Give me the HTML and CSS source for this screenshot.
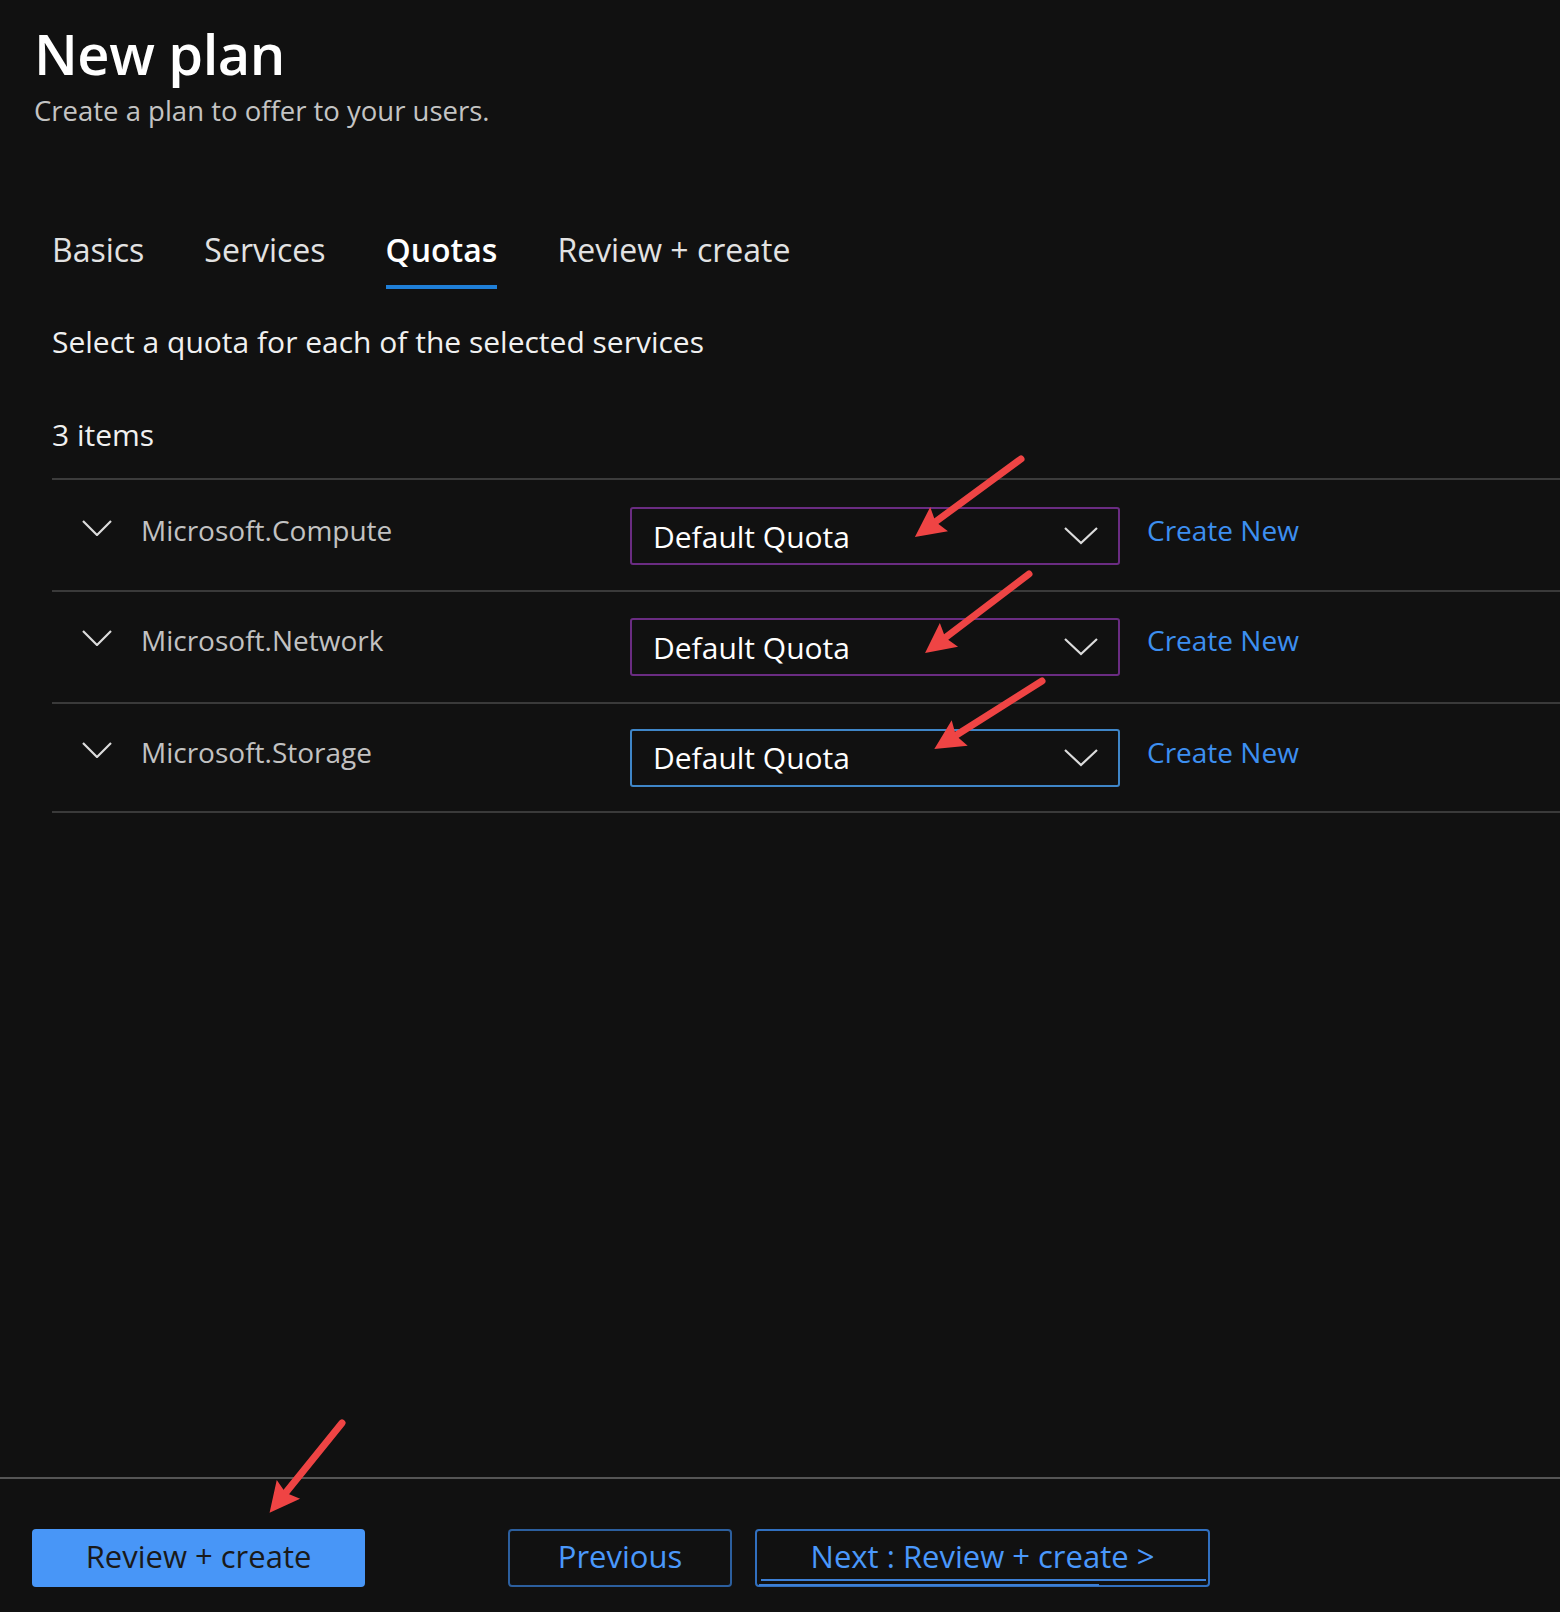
FILE: index.html
```html
<!DOCTYPE html>
<html lang="en">
<head>
<meta charset="utf-8">
<title>New plan</title>
<link rel="stylesheet" href="styles.css">
</head>
<body>
<div class="page">
  <header class="head">
    <h1 class="title">New plan</h1>
    <p class="subtitle">Create a plan to offer to your users.</p>
  </header>

  <nav class="tabs">
    <span class="tab">Basics</span>
    <span class="tab">Services</span>
    <span class="tab active">Quotas</span>
    <span class="tab">Review + create</span>
  </nav>

  <section class="content">
    <p class="desc">Select a quota for each of the selected services</p>
    <p class="count">3 items</p>
    <div class="list">
      <div class="row row-first">
        <svg class="expander" viewBox="0 0 30 16" width="30" height="16"><polyline points="1,1 15,15 29,1"/></svg>
        <span class="name">Microsoft.Compute</span>
        <div class="select select-purple"><span class="select-text">Default Quota</span><svg class="select-chev" viewBox="0 0 34 18" width="34" height="18"><polyline points="1,1 17,16 33,1"/></svg></div>
        <a class="link">Create New</a>
      </div>
      <div class="row">
        <svg class="expander" viewBox="0 0 30 16" width="30" height="16"><polyline points="1,1 15,15 29,1"/></svg>
        <span class="name">Microsoft.Network</span>
        <div class="select select-purple"><span class="select-text">Default Quota</span><svg class="select-chev" viewBox="0 0 34 18" width="34" height="18"><polyline points="1,1 17,16 33,1"/></svg></div>
        <a class="link">Create New</a>
      </div>
      <div class="row row-last">
        <svg class="expander" viewBox="0 0 30 16" width="30" height="16"><polyline points="1,1 15,15 29,1"/></svg>
        <span class="name">Microsoft.Storage</span>
        <div class="select select-blue"><span class="select-text">Default Quota</span><svg class="select-chev" viewBox="0 0 34 18" width="34" height="18"><polyline points="1,1 17,16 33,1"/></svg></div>
        <a class="link">Create New</a>
      </div>
    </div>
  </section>

  <footer class="footer">
    <button class="btn btn-primary">Review + create</button>
    <button class="btn btn-outline btn-prev">Previous</button>
    <button class="btn btn-outline btn-next">Next : Review + create &gt;</button>
  </footer>

  <svg class="annot" viewBox="0 0 1560 1612" width="1560" height="1612">
    <defs>
      <marker id="ah" viewBox="0 0 10 10" refX="5" refY="5" markerWidth="34" markerHeight="30" markerUnits="userSpaceOnUse" orient="auto">
        <path d="M0,0 L10,5 L0,10 L1.5,5 z" fill="#ef4444"/>
      </marker>
    </defs>
    <line x1="1021" y1="459" x2="927" y2="528" marker-end="url(#ah)"/>
    <line x1="1029" y1="574" x2="937" y2="644" marker-end="url(#ah)"/>
    <line x1="1042" y1="681" x2="947" y2="741" marker-end="url(#ah)"/>
    <line x1="342" y1="1423" x2="279" y2="1501" marker-end="url(#ah)"/>
  </svg>
</div>
</body>
</html>
```

FILE: styles.css
```css
* { box-sizing: border-box; }

html, body {
  margin: 0;
  padding: 0;
  background: #111111;
}

body {
  font-family: "Open Sans", "Noto Sans", "DejaVu Sans", sans-serif;
  color: #e6e6e6;
}

.page {
  position: relative;
  width: 1560px;
  height: 1612px;
  display: flex;
  flex-direction: column;
  overflow: hidden;
}

.head {
  padding: 21px 0 0 34px;
}

.title {
  margin: 0;
  font-size: 56px;
  line-height: 64px;
  font-weight: 600;
  color: #ffffff;
  letter-spacing: -0.5px;
}

.subtitle {
  margin: 9px 0 0;
  font-size: 27.5px;
  line-height: 34px;
  color: #c4c4c4;
}

.tabs {
  display: flex;
  gap: 60px;
  margin: 102px 0 0 52px;
}

.tab {
  font-size: 32px;
  line-height: 40px;
  padding-bottom: 15px;
  border-bottom: 4px solid transparent;
  color: #e2e2e2;
}

.tab.active {
  font-weight: 600;
  color: #ffffff;
  border-bottom-color: #1f7fd8;
}

.content {
  padding-left: 52px;
}

.desc {
  margin: 33px 0 0;
  font-size: 30px;
  line-height: 40px;
  color: #f0f0f0;
}

.count {
  margin: 53px 0 0;
  font-size: 30px;
  line-height: 40px;
  color: #f0f0f0;
}

.list {
  margin-top: 23px;
  border-top: 2px solid #3c3c3c;
}

.row {
  display: flex;
  align-items: center;
  height: 112px;
  padding-left: 30px;
  border-bottom: 2px solid #3a3a3a;
}

.row-first {
  padding-top: 2px;
}

.row-last {
  height: 109px;
}

.expander {
  align-self: flex-start;
  margin-top: 38px;
  flex: none;
}

.expander polyline,
.select-chev polyline {
  fill: none;
  stroke: #dcdcdc;
  stroke-width: 2.2;
}

.name {
  align-self: flex-start;
  margin: 30px 0 0 29px;
  width: 489px;
  font-size: 28px;
  line-height: 36px;
  color: #c2c2c2;
}

.select {
  width: 490px;
  height: 58px;
  display: flex;
  align-items: center;
  justify-content: space-between;
  padding: 0 20px 0 21px;
  border: 2px solid #6a2c82;
  border-radius: 3px;
}

.select-blue {
  border-color: #3f86c8;
}

.select-text {
  font-size: 30px;
  color: #ffffff;
}

.select-chev {
  flex: none;
}

.link {
  align-self: flex-start;
  margin: 30px 0 0 27px;
  font-size: 28px;
  line-height: 36px;
  color: #3d8ff0;
}

.footer {
  margin-top: auto;
  border-top: 2px solid #555555;
  padding: 50px 0 25px 32px;
  display: flex;
}

.btn {
  height: 58px;
  font-family: inherit;
  font-size: 31px;
  line-height: 50px;
  padding: 0 0 4px;
  border-radius: 4px;
  cursor: pointer;
}

.btn-primary {
  width: 333px;
  background: #4896f7;
  border: none;
  color: #1a1a1a;
}

.btn-outline {
  background: #111111;
  border: 2px solid #2c5f9e;
  color: #4a98fb;
}

.btn-prev {
  width: 224px;
  margin-left: 143px;
}

.btn-next {
  position: relative;
  width: 455px;
  margin-left: 23px;
  border-color: #3170c0;
}

.btn-next::before {
  content: "";
  position: absolute;
  left: 4px;
  right: 2px;
  bottom: 4px;
  height: 2px;
  background: #3c7fd6;
}

.btn-next::after {
  content: "";
  position: absolute;
  left: 2px;
  width: 340px;
  bottom: -1px;
  height: 2px;
  background: #3c7fd6;
}

.annot {
  position: absolute;
  left: 0;
  top: 0;
  pointer-events: none;
}

.annot line {
  stroke: #ef4444;
  stroke-width: 7;
  stroke-linecap: round;
}
```
